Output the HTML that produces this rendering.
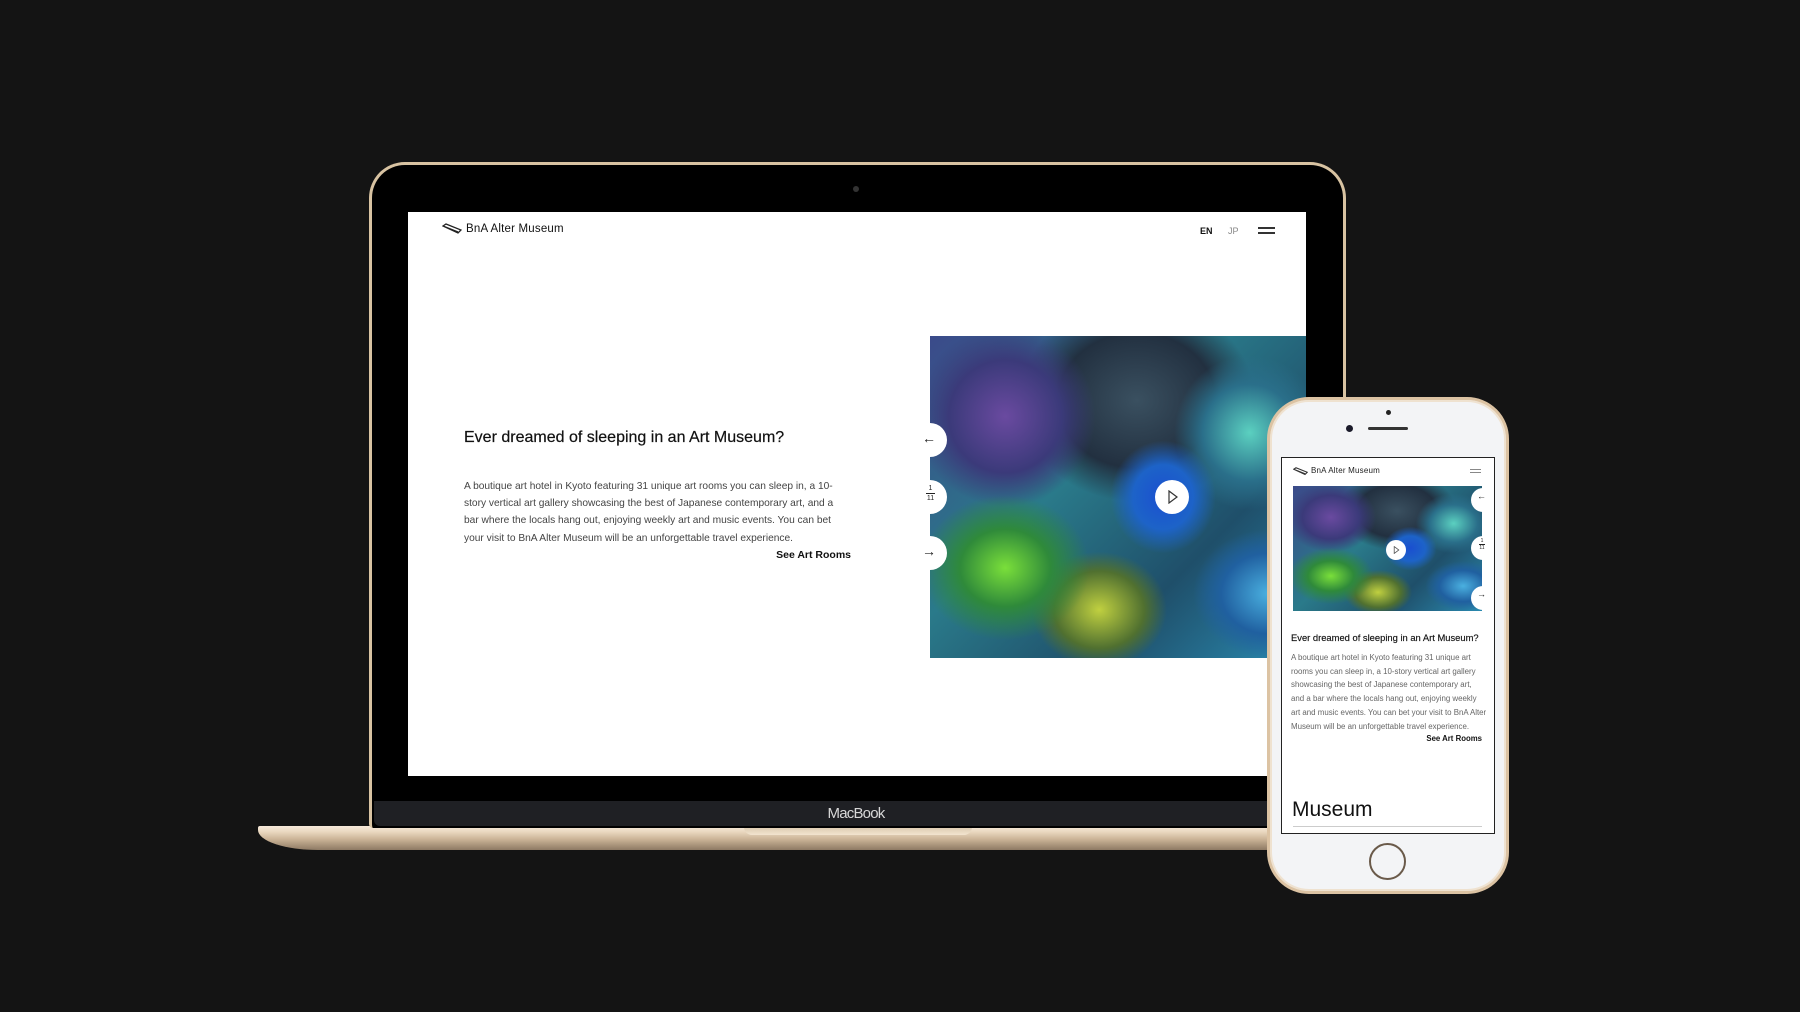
<!DOCTYPE html>
<html><head><meta charset="utf-8"><style>
*{margin:0;padding:0;box-sizing:border-box}
body{width:1800px;height:1012px;background:#141414;position:relative;overflow:hidden;font-family:"Liberation Sans",Arial,sans-serif}
.abs{position:absolute}
.art{background:
radial-gradient(ellipse 20% 25% at 62% 50%,#1a4fd0 0%,#1d63c8 40%,transparent 70%),
radial-gradient(ellipse 30% 30% at 20% 72%,#7adf3a 0%,#2f8a3a 40%,transparent 75%),
radial-gradient(ellipse 25% 30% at 85% 30%,#5bd0c0 0%,#2a6f8a 50%,transparent 80%),
radial-gradient(ellipse 30% 35% at 20% 25%,#6a4aa0 0%,#3b3a7a 50%,transparent 80%),
radial-gradient(ellipse 25% 25% at 90% 80%,#4ab0e0 0%,#2060a0 50%,transparent 80%),
radial-gradient(ellipse 20% 20% at 45% 85%,#c0d040 0%,#507030 60%,transparent 90%),
radial-gradient(ellipse 35% 35% at 55% 20%,#3a5060 0%,#223040 60%,transparent 90%),
linear-gradient(135deg,#3b4a8a,#2a7a8a 40%,#1f4f6a 70%,#2a8ab0);}
.circ{position:absolute;border-radius:50%;background:#fff}
</style></head><body>

<div class="abs" style="left:258px;top:826px;width:1200px;height:24px;border-radius:2px 2px 60px 60px / 2px 2px 20px 20px;background:linear-gradient(#f7eadb 0%,#e9d7bf 25%,#cbb497 55%,#8e7a64 100%)"></div>
<div class="abs" style="left:744px;top:826px;width:228px;height:9px;border-radius:0 0 8px 8px;background:linear-gradient(#d9c7ac,#f2e4cf)"></div>
<div class="abs" style="left:369px;top:162px;width:977px;height:666px;border-radius:36px 36px 4px 4px;background:#000;border:3px solid #d8c3a2;border-bottom:none"></div>
<div class="abs" style="left:374px;top:801px;width:968px;height:25px;background:#1f2024;border-radius:0 0 6px 6px"></div>
<div class="abs" style="left:0;top:805px;width:1712px;text-align:center;color:#d8d8d8;font-size:15px;letter-spacing:-0.8px">MacBook</div>
<div class="circ" style="left:853px;top:186px;width:6px;height:6px;background:#333"></div>

<div class="abs" style="left:408px;top:212px;width:898px;height:564px;background:#fff;overflow:hidden">
  <svg class="abs" style="left:34px;top:11px" width="20" height="12" viewBox="0 0 20 12"><path d="M1 3 L4 1 L19 7 L16 10 Z M1 3 L16 9" fill="none" stroke="#222" stroke-width="1.3"/></svg>
  <div class="abs" style="left:58px;top:11px;font-size:11.5px;color:#111;letter-spacing:0.2px">BnA Alter Museum</div>
  <div class="abs" style="left:792px;top:14px;font-size:9px;font-weight:bold;color:#111">EN</div>
  <div class="abs" style="left:820px;top:14px;font-size:9px;color:#888">JP</div>
  <div class="abs" style="left:850px;top:15px;width:17px;height:1.5px;background:#333"></div>
  <div class="abs" style="left:850px;top:20px;width:17px;height:1.5px;background:#333"></div>
  <div class="abs" style="left:56px;top:217px;font-size:16px;color:#111;-webkit-text-stroke:0.2px #111">Ever dreamed of sleeping in an Art Museum?</div>
  <div class="abs" style="left:56px;top:266px;width:380px;font-size:10.2px;line-height:17.2px;color:#444">A boutique art hotel in Kyoto featuring 31 unique art rooms you can sleep in, a 10-story vertical art gallery showcasing the best of Japanese contemporary art, and a bar where the locals hang out, enjoying weekly art and music events. You can bet your visit to BnA Alter Museum will be an unforgettable travel experience.</div>
  <div class="abs" style="left:300px;top:337px;width:143px;text-align:right;font-size:10.5px;font-weight:bold;color:#111">See Art Rooms</div>
  <div class="abs art" style="left:522px;top:124px;width:376px;height:322px"></div>
  <div class="circ" style="left:505px;top:211px;width:34px;height:34px"></div>
  <div class="abs" style="left:514px;top:218px;font-size:14px;color:#222">←</div>
  <div class="circ" style="left:505px;top:268px;width:34px;height:34px"></div>
  <div class="abs" style="left:518px;top:272px;font-size:7px;color:#222;text-align:center;width:9px;line-height:9px">1<br><span style="display:block;border-top:1px solid #222">11</span></div>
  <div class="circ" style="left:505px;top:324px;width:34px;height:34px"></div>
  <div class="abs" style="left:514px;top:331px;font-size:14px;color:#222">→</div>
  <div class="circ" style="left:747px;top:268px;width:34px;height:34px"></div>
  <svg class="abs" style="left:759px;top:278px" width="12" height="14" viewBox="0 0 12 14"><path d="M2 1 L10 7 L2 13 Z" fill="none" stroke="#333" stroke-width="1.2"/></svg>
</div>

<div class="abs" style="left:1267px;top:397px;width:242px;height:497px;border-radius:42px;background:#f3f4f6;border:3px solid #dcc3a3;box-shadow:inset 0 0 0 2px #efe2d0"></div>
<div class="circ" style="left:1386px;top:410px;width:5px;height:5px;background:#222"></div>
<div class="circ" style="left:1346px;top:425px;width:7px;height:7px;background:#1a1a2a"></div>
<div class="abs" style="left:1368px;top:427px;width:40px;height:3px;border-radius:2px;background:#333"></div>
<div class="abs" style="left:1281px;top:457px;width:214px;height:377px;background:#fff;border:1.5px solid #222;overflow:hidden">
  <svg class="abs" style="left:11px;top:9px" width="15" height="9" viewBox="0 0 20 12"><path d="M1 3 L4 1 L19 7 L16 10 Z M1 3 L16 9" fill="none" stroke="#333" stroke-width="1.5"/></svg>
  <div class="abs" style="left:29px;top:8px;font-size:8px;color:#222;letter-spacing:0.2px">BnA Alter Museum</div>
  <div class="abs" style="left:188px;top:11px;width:11px;height:1px;background:#888"></div>
  <div class="abs" style="left:188px;top:14px;width:11px;height:1px;background:#888"></div>
  <div class="abs art" style="left:11px;top:28px;width:189px;height:125px"></div>
  <div class="circ" style="left:189px;top:30px;width:24px;height:24px"></div>
  <div class="abs" style="left:195px;top:33px;font-size:9px;color:#222">←</div>
  <div class="circ" style="left:189px;top:78px;width:24px;height:24px"></div>
  <div class="abs" style="left:197px;top:80px;font-size:5px;color:#222;text-align:center;width:6px;line-height:6px">1<br><span style="display:block;border-top:0.5px solid #222">11</span></div>
  <div class="circ" style="left:189px;top:128px;width:24px;height:24px"></div>
  <div class="abs" style="left:195px;top:131px;font-size:9px;color:#222">→</div>
  <div class="circ" style="left:104px;top:82px;width:20px;height:20px"></div>
  <svg class="abs" style="left:111px;top:88px" width="7" height="8" viewBox="0 0 12 14"><path d="M2 1 L10 7 L2 13 Z" fill="none" stroke="#555" stroke-width="1.4"/></svg>
  <div class="abs" style="left:9px;top:174px;font-size:9.4px;color:#111;-webkit-text-stroke:0.15px #111">Ever dreamed of sleeping in an Art Museum?</div>
  <div class="abs" style="left:9px;top:193px;width:196px;font-size:7.9px;line-height:13.7px;color:#666">A boutique art hotel in Kyoto featuring 31 unique art rooms you can sleep in, a 10-story vertical art gallery showcasing the best of Japanese contemporary art, and a bar where the locals hang out, enjoying weekly art and music events. You can bet your visit to BnA Alter Museum will be an unforgettable travel experience.</div>
  <div class="abs" style="left:100px;top:276px;width:100px;text-align:right;font-size:7.8px;font-weight:bold;color:#111">See Art Rooms</div>
  <div class="abs" style="left:10px;top:340px;font-size:21px;color:#111">Museum</div>
  <div class="abs" style="left:11px;top:368px;width:189px;height:1px;background:#ccc"></div>
</div>
<div class="circ" style="left:1369px;top:843px;width:37px;height:37px;background:transparent;border:2px solid #6a5a4a"></div>

</body></html>
